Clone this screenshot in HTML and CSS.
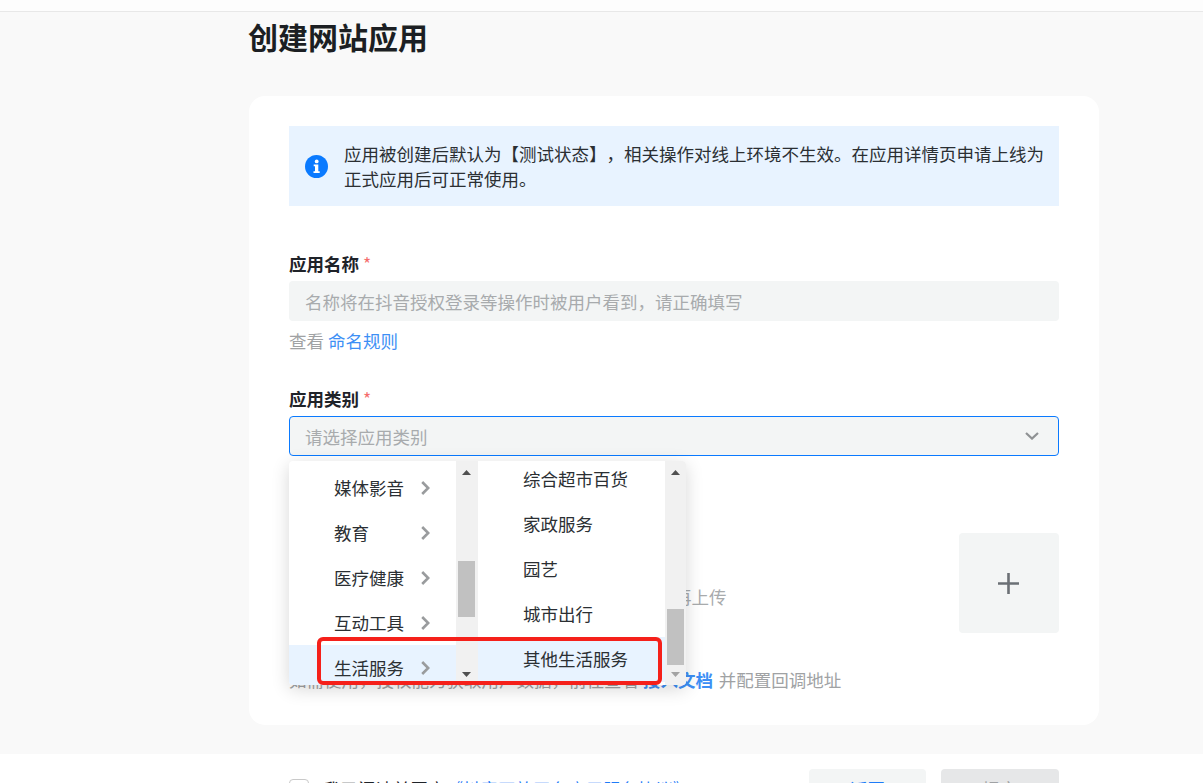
FILE: index.html
```html
<!DOCTYPE html>
<html lang="zh-CN">
<head>
<meta charset="utf-8">
<title>创建网站应用</title>
<link rel="stylesheet" href="styles.css">
</head>
<body>
<header class="topbar"></header>
<main class="main">
  <h1 class="title">创建网站应用</h1>
  <section class="card">
    <div class="alert">
      <svg class="alert-icon" viewBox="0 0 23 23" aria-hidden="true">
        <circle cx="11.5" cy="11.5" r="11.5" fill="#0a7aff"/>
        <circle cx="11.7" cy="6.4" r="1.9" fill="#fff"/>
        <path d="M8.7 9.6h4.6v6.6h1.4v1.7H8.5v-1.7h1.5v-4.9H8.7z" fill="#fff"/>
      </svg>
      <p class="alert-text">应用被创建后默认为【测试状态】，相关操作对线上环境不生效。在应用详情页申请上线为正式应用后可正常使用。</p>
    </div>

    <div class="field field-name">
      <label class="label">应用名称<span class="star">*</span></label>
      <div class="input placeholder">名称将在抖音授权登录等操作时被用户看到，请正确填写</div>
      <p class="help">查看 <a class="link">命名规则</a></p>
    </div>

    <div class="field field-type">
      <label class="label">应用类别<span class="star">*</span></label>
      <div class="select-wrap">
        <div class="input select placeholder">
          <span>请选择应用类别</span>
          <svg class="select-arrow" viewBox="0 0 14 8" aria-hidden="true"><path d="M1 1l6 5.6L13 1" fill="none" stroke="#8f9294" stroke-width="2.2"/></svg>
        </div>
        <div class="dropdown">
          <div class="panel panel-left">
            <ul class="menu menu-left">
              <li class="item"><span>媒体影音</span><svg class="chev" viewBox="0 0 9 14"><path d="M1.2 1l6 6-6 6" fill="none" stroke="#9a9c9e" stroke-width="2.6"/></svg></li>
              <li class="item"><span>教育</span><svg class="chev" viewBox="0 0 9 14"><path d="M1.2 1l6 6-6 6" fill="none" stroke="#9a9c9e" stroke-width="2.6"/></svg></li>
              <li class="item"><span>医疗健康</span><svg class="chev" viewBox="0 0 9 14"><path d="M1.2 1l6 6-6 6" fill="none" stroke="#9a9c9e" stroke-width="2.6"/></svg></li>
              <li class="item"><span>互动工具</span><svg class="chev" viewBox="0 0 9 14"><path d="M1.2 1l6 6-6 6" fill="none" stroke="#9a9c9e" stroke-width="2.6"/></svg></li>
              <li class="item active"><span>生活服务</span><svg class="chev" viewBox="0 0 9 14"><path d="M1.2 1l6 6-6 6" fill="none" stroke="#9a9c9e" stroke-width="2.6"/></svg></li>
            </ul>
            <div class="scrollbar scrollbar-left">
              <svg class="sb-arrow sb-up" viewBox="0 0 9 5"><path d="M0 5L4.5 0 9 5z" fill="#505050"/></svg>
              <div class="thumb thumb-left"></div>
              <svg class="sb-arrow sb-down" viewBox="0 0 9 5"><path d="M0 0L4.5 5 9 0z" fill="#505050"/></svg>
            </div>
          </div>
          <div class="panel panel-right">
            <ul class="menu menu-right">
              <li class="item"><span>综合超市百货</span></li>
              <li class="item"><span>家政服务</span></li>
              <li class="item"><span>园艺</span></li>
              <li class="item"><span>城市出行</span></li>
              <li class="item active"><span>其他生活服务</span></li>
            </ul>
            <div class="scrollbar">
              <svg class="sb-arrow sb-up" viewBox="0 0 9 5"><path d="M0 5L4.5 0 9 5z" fill="#505050"/></svg>
              <div class="thumb thumb-right"></div>
              <svg class="sb-arrow sb-down" viewBox="0 0 9 5"><path d="M0 0L4.5 5 9 0z" fill="#a3a3a3"/></svg>
            </div>
          </div>
          <div class="annotation"></div>
        </div>
      </div>
    </div>

    <div class="upload-row">
      <p class="upload-hint">请选择清晰且尺寸合适的应用图标文件并在裁剪后再上传</p>
      <div class="upload-box">
        <svg class="plus" viewBox="0 0 21 21" aria-hidden="true"><path d="M10.5 0v21M0 10.5h21" stroke="#6b7075" stroke-width="2.6"/></svg>
      </div>
    </div>

    <p class="help help-last">如需使用，授权能力获取用户数据，前往查看 <a class="link link-bold">接入文档</a> 并配置回调地址</p>
  </section>
</main>
<footer class="footer">
  <div class="agree">
    <span class="checkbox"></span>
    <span class="agree-text">我已阅读并同意<a class="link-agree">《抖音开放平台应用服务协议》</a></span>
  </div>
  <div class="actions">
    <button class="btn btn-back">返回</button>
    <button class="btn btn-submit">提交</button>
  </div>
</footer>
</body>
</html>
```

FILE: styles.css
```css
* { box-sizing: border-box; }

html, body {
  margin: 0;
  height: 783px;
  overflow: hidden;
}

body {
  background: #f9f9f9;
  color: #1f2329;
  font-family: "Noto Sans CJK SC", "Noto Sans", sans-serif;
  font-size: 17.5px;
  line-height: 24px;
  text-spacing-trim: space-all;
}

p, ul, h1 { margin: 0; padding: 0; }
ul { list-style: none; }

.topbar {
  height: 12px;
  background: #fdfdfd;
  border-bottom: 1px solid #e8e8e8;
}

.main {
  padding-left: 249px;
  padding-bottom: 29px;
}

.title {
  width: 300px;
  margin-left: -1px;
  height: 52px;
  line-height: 48px;
  margin-bottom: 32px;
  font-size: 30px;
  font-weight: 700;
  color: #1c1f23;
}

.card {
  width: 850px;
  height: 629px;
  padding: 30px 40px 0;
  background: #fff;
  border-radius: 16px;
}

.alert {
  display: flex;
  align-items: center;
  gap: 16px;
  height: 80px;
  padding: 0 10px 0 16px;
  background: #e8f3ff;
}

.alert-icon {
  width: 23px;
  height: 23px;
  flex: none;
}

.alert-text {
  line-height: 25px;
  color: #2b2f33;
}

.field-name { margin-top: 46px; }
.field-type { margin-top: 34px; }

.label {
  display: block;
  height: 24px;
  margin-bottom: 5px;
  font-weight: 700;
  color: #1f2329;
}

.star {
  margin-left: 4px;
  font-weight: 400;
  color: #f56c6c;
}

.input {
  height: 40px;
  padding: 2px 16px 0;
  display: flex;
  align-items: center;
  background: #f3f5f5;
  border-radius: 4px;
}

.placeholder { color: #a8abad; }

.help {
  margin-top: 8px;
  color: #a0a2a4;
}

.link { color: #3d8ff5; }
.link-bold { font-weight: 700; margin-right: 2px; }

.select-wrap { position: relative; }

.select {
  justify-content: space-between;
  padding: 2px 19px 0 15px;
  border: 1px solid #0a7aff;
}

.select-arrow {
  width: 14px;
  height: 8px;
  margin-top: -2px;
}

.dropdown {
  position: absolute;
  top: 45px;
  left: 0;
  z-index: 5;
  display: flex;
  width: 397px;
  height: 224px;
  background: #fff;
  border-radius: 4px;
  box-shadow: 0 4px 18px rgba(0, 0, 0, 0.16);
  color: #2b2f33;
}

.panel {
  display: flex;
  overflow: hidden;
}

.panel-left {
  width: 189px;
  border-radius: 4px 0 0 4px;
}

.panel-right {
  width: 208px;
  border-radius: 0 4px 4px 0;
}

.menu {
  flex: 1;
  min-width: 0;
}

.menu-left { margin-top: 4px; }
.menu-right { margin-top: -4px; }

.item {
  display: flex;
  align-items: center;
  justify-content: space-between;
  height: 45px;
  flex: none;
}

.menu-left .item { padding: 0 26px 0 45px; }
.menu-right .item { padding: 0 16px 2px 45px; }

.item.active { background: #e8f3ff; }

.chev {
  width: 9px;
  height: 14px;
}

.scrollbar {
  position: relative;
  flex: none;
  width: 21px;
  background: #f1f1f1;
}

.scrollbar-left { width: 22px; }

.sb-arrow {
  position: absolute;
  left: 6px;
  width: 9px;
  height: 5px;
}

.sb-up { top: 9px; }
.sb-down { bottom: 8px; }

.thumb {
  position: absolute;
  left: 2px;
  width: 17px;
  background: #c1c1c1;
}

.thumb-left { top: 100px; height: 56px; }
.thumb-right { top: 148px; height: 56px; }

.annotation {
  position: absolute;
  left: 28px;
  top: 176px;
  width: 345px;
  height: 48px;
  border: 4px solid #f5201a;
  border-radius: 6px;
  pointer-events: none;
}

.upload-row {
  display: flex;
  justify-content: space-between;
  align-items: flex-start;
  margin-top: 77px;
}

.upload-hint {
  margin-top: 52px;
  color: #a8abad;
}

.upload-box {
  display: flex;
  align-items: center;
  justify-content: center;
  width: 100px;
  height: 100px;
  background: #f3f5f5;
  border-radius: 4px;
}

.plus {
  width: 21px;
  height: 21px;
  margin-right: 1px;
}

.help-last { margin-top: 35px; }

.footer {
  display: flex;
  justify-content: space-between;
  align-items: flex-start;
  height: 90px;
  padding: 15px 144px 0 289px;
  background: #fff;
}

.agree {
  display: flex;
  align-items: flex-start;
  gap: 14px;
  padding-top: 8px;
}

.checkbox {
  width: 20px;
  height: 20px;
  margin-top: 2px;
  flex: none;
  border: 1.5px solid #c9c9c9;
  border-radius: 4px;
}

.agree-text { color: #1f2329; }
.link-agree { color: #1f7cf8; }

.actions {
  display: flex;
  gap: 15px;
}

.btn {
  width: 117px;
  height: 44px;
  padding: 0 0 4px;
  border: 0;
  border-radius: 4px;
  font: inherit;
}

.btn-back {
  background: #f3f5f5;
  color: #1f7cf8;
}

.btn-submit {
  width: 118px;
  background: #e6e7e8;
  color: #a0a2a4;
}
```
